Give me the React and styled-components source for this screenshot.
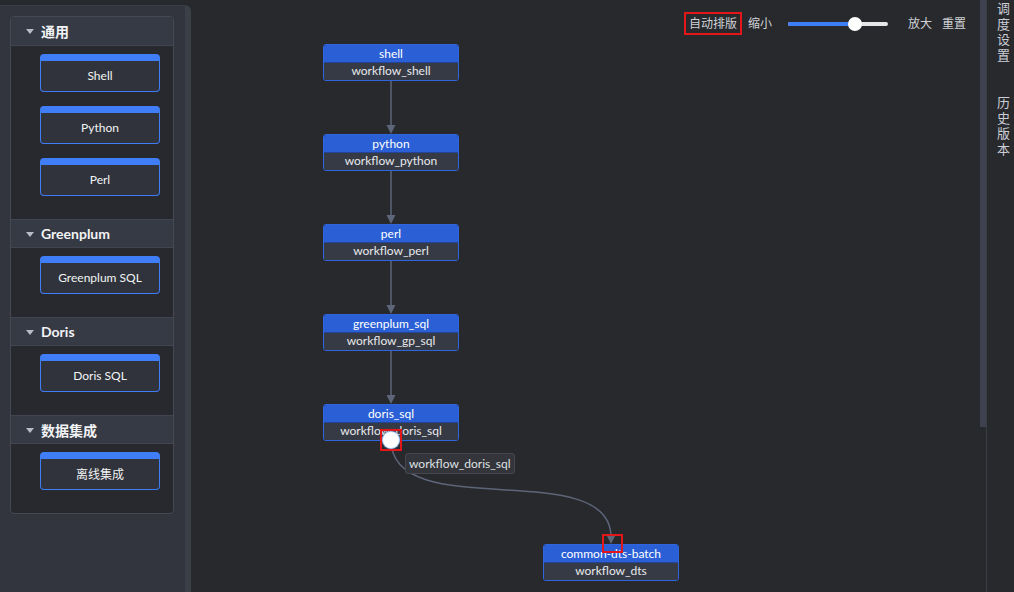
import React from "react";
import styled, { createGlobalStyle } from "styled-components";

const GlobalStyle = createGlobalStyle`
  html, body { margin: 0; padding: 0; background: #27292d; }
  body {
    font-family: Lato, "Noto Sans CJK SC", sans-serif;
    color: #e6e7ea;
    overflow: hidden;
  }
  * { box-sizing: border-box; }
`;

const Page = styled.div`
  display: flex;
  width: 1014px;
  height: 592px;
  background: #27292d;
`;

const Sidebar = styled.aside`
  display: flex;
  width: 191px;
  margin-top: 5px;
  background: #32353d;
  border-top-right-radius: 6px;
  border-top: 1px solid #393c44;
`;

const SidebarContent = styled.div`
  flex: 1;
  padding: 10px 11px 0 10px;
`;

const SidebarTrack = styled.div`
  width: 6px;
  background: #3a3f48;
  border-top-right-radius: 5px;
`;

const Panel = styled.div`
  border: 1px solid #454952;
  border-radius: 4px;
  overflow: hidden;
  background: #27292e;
`;

const GroupHeader = styled.div`
  display: flex;
  align-items: center;
  height: 29px;
  padding-left: 15px;
  gap: 7px;
  background: #363a44;
  border-top: ${(p) => (p.$first ? "none" : "1px solid #41454f")};
  border-bottom: 1px solid #41454f;
  font-size: 14px;
  font-weight: 700;
  color: #f2f3f5;
`;

const Caret = styled.span`
  width: 0;
  height: 0;
  border-left: 4px solid transparent;
  border-right: 4px solid transparent;
  border-top: 5px solid #b9bcc4;
  margin-top: 1px;
`;

const GroupBody = styled.div`
  display: flex;
  flex-direction: column;
  gap: 14px;
  padding: 8px 0 23px 29px;
`;

const ToolItem = styled.div`
  width: 120px;
  height: 38px;
  border: 1px solid #3f7ef6;
  border-top: 7px solid #3f7ef6;
  border-radius: 4px;
  background: #30333b;
  display: flex;
  align-items: center;
  justify-content: center;
  font-size: 12px;
  color: #f2f3f5;
  padding-bottom: 1px;
`;

const Canvas = styled.main`
  position: relative;
  flex: 1;
  background: #27292d;
`;

const Toolbar = styled.div`
  display: flex;
  align-items: center;
  justify-content: flex-end;
  padding: 12px 14px 0 0;
  height: 35px;
  font-size: 12px;
  color: #d0d2d6;
`;

const ToolText = styled.span`
  margin-left: ${(p) => p.$ml || 0}px;
  line-height: 19px;
  ${(p) => p.$marked && `border: 2px solid #e3161a; padding: 0 3px;`}
`;

const Slider = styled.div`
  position: relative;
  width: 100px;
  height: 4px;
  margin-left: 16px;
  margin-right: 20px;
  border-radius: 2px;
  background: #e6e6e6;
`;

const SliderFill = styled.div`
  height: 100%;
  border-radius: 2px;
  background: #3d7ef6;
`;

const SliderThumb = styled.div`
  position: absolute;
  top: 50%;
  width: 14px;
  height: 14px;
  margin: -7px 0 0 -7px;
  border-radius: 50%;
  background: #ffffff;
`;

const NodeBox = styled.div`
  position: absolute;
  left: ${(p) => p.$x}px;
  top: ${(p) => p.$y}px;
  width: 136px;
  border: 1px solid #2f66e0;
  border-radius: 3px;
  overflow: hidden;
  font-size: 12px;
  text-align: center;
`;

const NodeTitle = styled.div`
  height: 18px;
  line-height: 17px;
  background: #2a5fd6;
  color: #ffffff;
  border-bottom: 1px solid #24449a;
`;

const NodeSub = styled.div`
  height: 17px;
  line-height: 16px;
  background: #363a45;
  color: #e8e9ec;
`;

const Edges = styled.svg`
  position: absolute;
  left: 0;
  top: 0;
  width: 100%;
  height: 100%;
  pointer-events: none;
`;

const Handle = styled.div`
  position: absolute;
  left: 192px;
  top: 432px;
  width: 16px;
  height: 16px;
  border-radius: 50%;
  background: #ffffff;
  box-shadow: 0 0 0 1px #a9cdf7, 0 0 3px #7fb6ff;
`;

const Mark = styled.div`
  position: absolute;
  left: ${(p) => p.$x}px;
  top: ${(p) => p.$y}px;
  width: ${(p) => p.$w}px;
  height: ${(p) => p.$h}px;
  border: 2px solid #e3161a;
`;

const EdgeLabel = styled.div`
  position: absolute;
  left: 214px;
  top: 453px;
  height: 21px;
  padding: 0 3px;
  line-height: 19px;
  border: 1px solid #45484f;
  border-radius: 3px;
  background: #33353b;
  font-size: 12px;
  color: #dfe0e3;
`;

const VScroll = styled.div`
  width: 6px;
  background: #27292d;
`;

const VThumb = styled.div`
  height: 427px;
  background: #3e4250;
`;

const Divider = styled.div`
  width: 1px;
  background: #3b3e45;
`;

const RightPanel = styled.div`
  width: 27px;
  padding: 1px 0 0 10px;
  display: flex;
  flex-direction: column;
  gap: 32px;
`;

const VerticalLabel = styled.div`
  width: 14px;
  font-size: 13px;
  line-height: 15.5px;
  word-break: break-all;
  color: #cbced6;
`;

const groups = [
  { name: "通用", items: ["Shell", "Python", "Perl"] },
  { name: "Greenplum", items: ["Greenplum SQL"] },
  { name: "Doris", items: ["Doris SQL"] },
  { name: "数据集成", items: ["离线集成"] },
];

const nodes = [
  { x: 132, y: 44, title: "shell", sub: "workflow_shell" },
  { x: 132, y: 134, title: "python", sub: "workflow_python" },
  { x: 132, y: 224, title: "perl", sub: "workflow_perl" },
  { x: 132, y: 314, title: "greenplum_sql", sub: "workflow_gp_sql" },
  { x: 132, y: 404, title: "doris_sql", sub: "workflow_doris_sql" },
  { x: 352, y: 544, title: "common-dts-batch", sub: "workflow_dts" },
];

const EDGE = "#5d6578";

function Arrow({ x, y }) {
  return <polygon points={`${x - 4.5},${y - 9} ${x + 4.5},${y - 9} ${x},${y}`} fill={EDGE} />;
}

export default function App() {
  return (
    <>
      <GlobalStyle />
      <Page>
        <Sidebar>
          <SidebarContent>
            <Panel>
              {groups.map((g, i) => (
                <React.Fragment key={g.name}>
                  <GroupHeader $first={i === 0}>
                    <Caret />
                    {g.name}
                  </GroupHeader>
                  <GroupBody>
                    {g.items.map((it) => (
                      <ToolItem key={it}>{it}</ToolItem>
                    ))}
                  </GroupBody>
                </React.Fragment>
              ))}
            </Panel>
          </SidebarContent>
          <SidebarTrack />
        </Sidebar>

        <Canvas>
          <Toolbar>
            <ToolText $marked>自动排版</ToolText>
            <ToolText $ml={6}>缩小</ToolText>
            <Slider>
              <SliderFill style={{ width: "67%" }} />
              <SliderThumb style={{ left: "67%" }} />
            </Slider>
            <ToolText>放大</ToolText>
            <ToolText $ml={10}>重置</ToolText>
          </Toolbar>

          <Edges viewBox="0 0 789 592">
            {[80, 170, 260, 350].map((y) => (
              <g key={y}>
                <line x1="200" y1={y} x2="200" y2={y + 46} stroke={EDGE} strokeWidth="1.5" />
                <Arrow x={200} y={y + 54} />
              </g>
            ))}
            <path
              d="M200,440 C200,525 420,455 420,537"
              fill="none"
              stroke={EDGE}
              strokeWidth="1.5"
            />
            <Arrow x={420} y={544} />
          </Edges>

          {nodes.map((n) => (
            <NodeBox key={n.title} $x={n.x} $y={n.y}>
              <NodeTitle>{n.title}</NodeTitle>
              <NodeSub>{n.sub}</NodeSub>
            </NodeBox>
          ))}

          <EdgeLabel>workflow_doris_sql</EdgeLabel>
          <Handle />
          <Mark $x={189} $y={429} $w={22} $h={22} />
          <Mark $x={411} $y={534} $w={21} $h={19} />
        </Canvas>

        <VScroll>
          <VThumb />
        </VScroll>
        <Divider />
        <RightPanel>
          <VerticalLabel>调度设置</VerticalLabel>
          <VerticalLabel>历史版本</VerticalLabel>
        </RightPanel>
      </Page>
    </>
  );
}
